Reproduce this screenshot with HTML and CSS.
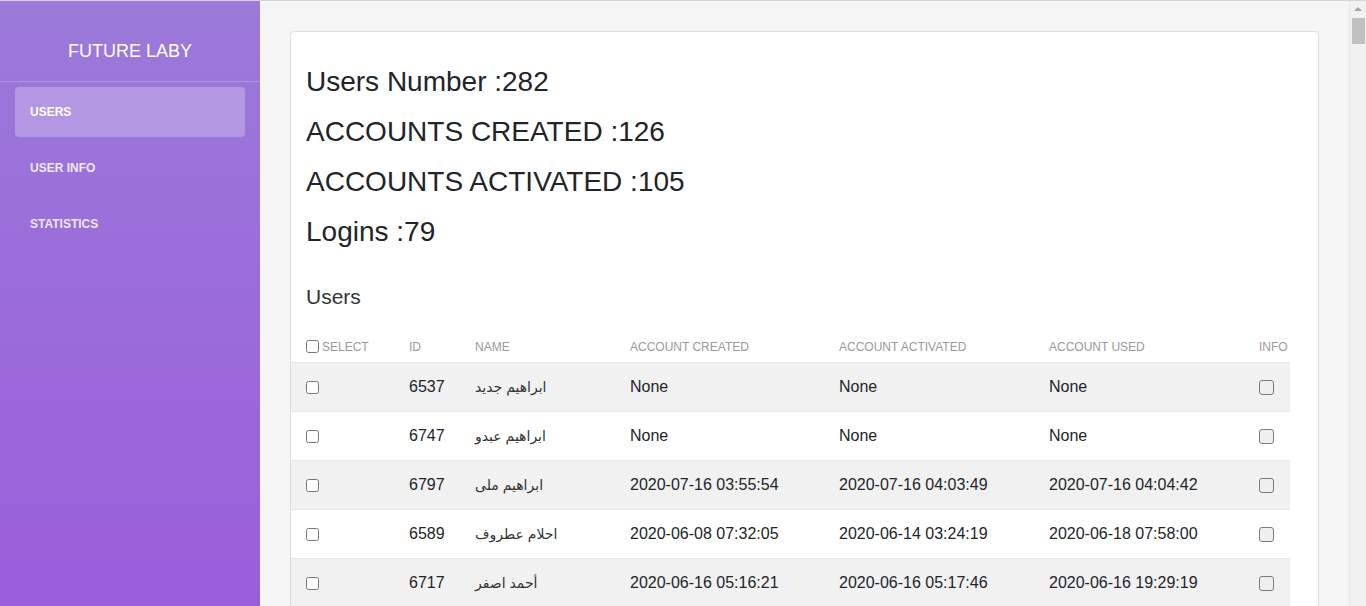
FILE: index.html
```html
<!DOCTYPE html>
<html lang="en">
<head>
<meta charset="utf-8">
<title>Future Laby - Users</title>
<link rel="stylesheet" href="styles.css">
</head>
<body>
<div class="app">
  <aside class="sidebar">
    <div class="brand">FUTURE LABY</div>
    <nav class="nav">
      <a class="nav-item active" href="#">USERS</a>
      <a class="nav-item" href="#">USER INFO</a>
      <a class="nav-item" href="#">STATISTICS</a>
    </nav>
  </aside>
  <main class="main">
    <section class="card">
      <div class="stats">
        <h3 class="stat">Users Number :282</h3>
        <h3 class="stat">ACCOUNTS CREATED :126</h3>
        <h3 class="stat">ACCOUNTS ACTIVATED :105</h3>
        <h3 class="stat">Logins :79</h3>
      </div>
      <h4 class="section-title">Users</h4>
      <table class="users">
        <colgroup>
          <col class="c-sel"><col class="c-id"><col class="c-name"><col class="c-date"><col class="c-date2"><col class="c-date2"><col class="c-info">
        </colgroup>
        <thead>
          <tr>
            <th><input type="checkbox" class="cb cb-head">SELECT</th>
            <th>ID</th>
            <th>NAME</th>
            <th>ACCOUNT CREATED</th>
            <th>ACCOUNT ACTIVATED</th>
            <th>ACCOUNT USED</th>
            <th>INFO</th>
          </tr>
        </thead>
        <tbody>
          <tr>
            <td><input type="checkbox" class="cb"></td>
            <td>6537</td>
            <td class="name">ابراهيم جديد</td>
            <td>None</td>
            <td>None</td>
            <td>None</td>
            <td><input type="checkbox" class="info-cb"></td>
          </tr>
          <tr>
            <td><input type="checkbox" class="cb"></td>
            <td>6747</td>
            <td class="name">ابراهيم عبدو</td>
            <td>None</td>
            <td>None</td>
            <td>None</td>
            <td><input type="checkbox" class="info-cb"></td>
          </tr>
          <tr>
            <td><input type="checkbox" class="cb"></td>
            <td>6797</td>
            <td class="name">ابراهيم ملى</td>
            <td>2020-07-16 03:55:54</td>
            <td>2020-07-16 04:03:49</td>
            <td>2020-07-16 04:04:42</td>
            <td><input type="checkbox" class="info-cb"></td>
          </tr>
          <tr>
            <td><input type="checkbox" class="cb"></td>
            <td>6589</td>
            <td class="name">احلام عطروف</td>
            <td>2020-06-08 07:32:05</td>
            <td>2020-06-14 03:24:19</td>
            <td>2020-06-18 07:58:00</td>
            <td><input type="checkbox" class="info-cb"></td>
          </tr>
          <tr>
            <td><input type="checkbox" class="cb"></td>
            <td>6717</td>
            <td class="name">أحمد اصفر</td>
            <td>2020-06-16 05:16:21</td>
            <td>2020-06-16 05:17:46</td>
            <td>2020-06-16 19:29:19</td>
            <td><input type="checkbox" class="info-cb"></td>
          </tr>
        </tbody>
      </table>
    </section>
  </main>
  <div class="scrollbar" aria-hidden="true">
    <div class="sb-arrow"></div>
    <div class="sb-thumb"></div>
  </div>
</div>
</body>
</html>
```
FILE: styles.css
```css
* { box-sizing: border-box; }
html, body { height: 100%; }
body {
  margin: 0;
  font-family: "Liberation Sans", Arial, "DejaVu Sans", sans-serif;
  color: #212529;
  background: #f5f5f5;
  border-top: 1px solid #d4d4d4;
  overflow: hidden;
}
.app {
  display: flex;
  height: 100%;
}
.sidebar {
  flex: 0 0 260px;
  background: linear-gradient(180deg, #9b7ad9 0%, #9a5edb 100%);
  color: #fff;
}
.brand {
  padding: 40px 0 20px;
  line-height: 20px;
  font-size: 18px;
  text-align: center;
  border-bottom: 1px solid rgba(255,255,255,0.22);
}
.nav {
  display: flex;
  flex-direction: column;
  gap: 6px;
  padding: 5px 15px;
}
.nav-item {
  display: block;
  height: 50px;
  line-height: 50px;
  padding-left: 15px;
  font-size: 12px;
  font-weight: bold;
  color: rgba(255,255,255,0.85);
  text-decoration: none;
  border-radius: 4px;
}
.nav-item.active {
  background: rgba(255,255,255,0.25);
  color: #fff;
}
.main {
  flex: 1;
  overflow: hidden;
  padding: 30px;
}
.scrollbar {
  flex: 0 0 17px;
  background: #f1f1f1;
  border-left: 1px solid #e8e8e8;
  display: flex;
  flex-direction: column;
  align-items: center;
  padding-top: 6px;
}
.sb-arrow {
  width: 0;
  height: 0;
  border-left: 4px solid transparent;
  border-right: 4px solid transparent;
  border-bottom: 4px solid #a3a3a3;
}
.sb-thumb {
  margin-top: 7px;
  width: 13px;
  height: 26px;
  background: #c1c1c1;
}
.card {
  background: #fff;
  border: 1px solid #dedede;
  border-radius: 4px;
  padding: 33px 15px 15px;
}
.stats { display: flex; flex-direction: column; gap: 16px; }
.stat {
  margin: 0;
  font-size: 28px;
  line-height: 34px;
  font-weight: normal;
}
.section-title {
  margin: 35px 0 0;
  font-size: 21px;
  line-height: 25px;
  font-weight: normal;
  color: #333;
}
.users {
  margin: 23px 0 0 -15px;
  width: 999px;
  table-layout: fixed;
  border-collapse: collapse;
}
.c-sel { width: 103px; }
.c-id { width: 66px; }
.c-name { width: 155px; }
.c-date { width: 209px; }
.c-date2 { width: 210px; }
.c-info { width: 46px; }
.users th {
  padding: 7px 15px;
  line-height: 16px;
  font-size: 12px;
  font-weight: normal;
  color: #999;
  text-align: left;
  white-space: nowrap;
}
.users td {
  padding: 12px 15px;
  line-height: 24px;
  font-size: 16px;
  border-top: 1px solid #e6e6e6;
  white-space: nowrap;
}
.users tbody tr:nth-child(odd) td { background: #f1f1f1; }
.users td.name {
  font-size: 14px;
  color: #333;
}
.cb {
  margin: 0;
  width: 13px;
  height: 13px;
  vertical-align: middle;
}
.cb-head {
  margin: 0 3px 2px 0;
  vertical-align: -2px;
}
.info-cb {
  appearance: none;
  -webkit-appearance: none;
  margin: 0;
  width: 15px;
  height: 15px;
  border: 1px solid #7a7a7a;
  border-radius: 3px;
  background: #efefef;
  vertical-align: middle;
}
```
